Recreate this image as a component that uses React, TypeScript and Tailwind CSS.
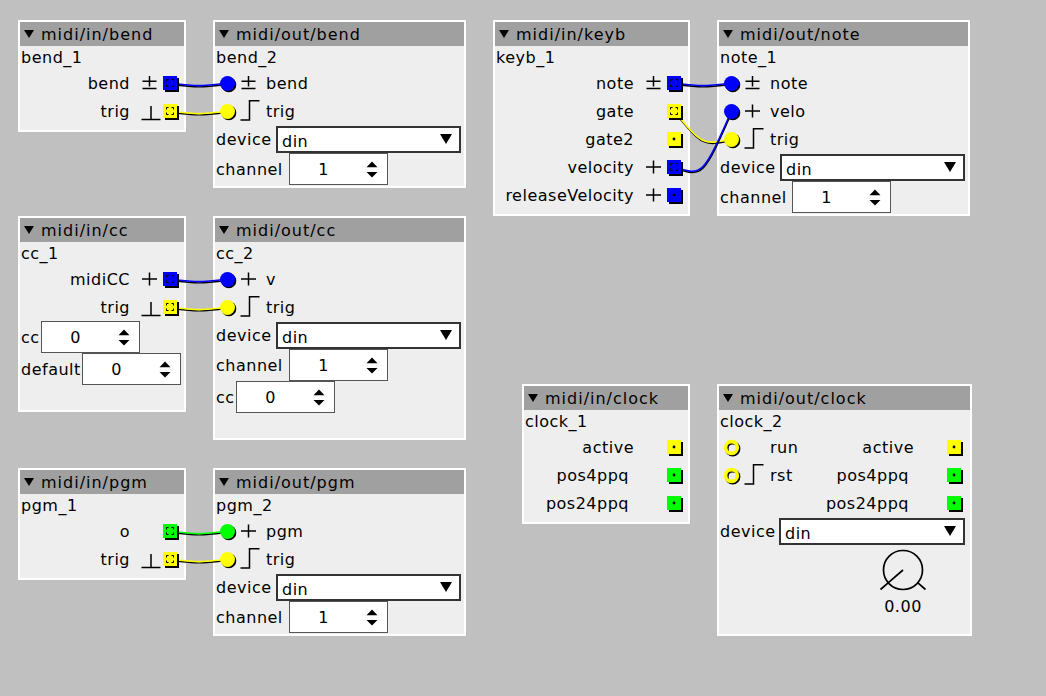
import React from "react";

type C = "blue" | "yellow" | "green";
const COL: Record<C, string> = { blue: "#0000ff", yellow: "#ffff00", green: "#00ff00" };
type G = "pm" | "plus" | "bool" | "edge" | "none";

const GLYPH: Record<G, string> = {
  pm: "M8.5 4 V14.5 M1.5 9.25 H15.5 M1.5 16.5 H15.5",
  plus: "M8.5 4.5 V17.5 M1 11 H16",
  bool: "M10 6 V19.5 M0.5 19.5 H19.5",
  edge: "M0.5 20 H9.5 V0.75 H19.5",
  none: "",
};

function Glyph({ kind, className = "" }: { kind: G; className?: string }) {
  return (
    <svg width="20" height="22" viewBox="0 0 20 22" className={`shrink-0 ${className}`}>
      {kind !== "none" && <path d={GLYPH[kind]} stroke="#000" strokeWidth="1.5" fill="none" />}
    </svg>
  );
}

function OutJack({ color, connected }: { color: C; connected: boolean }) {
  return (
    <svg width="14" height="14" viewBox="0 0 14 14" className="relative z-20 shrink-0 overflow-visible ml-[2px]">
      <rect x="2" y="2" width="14" height="14" fill="#000" />
      <rect x="0" y="0" width="14" height="14" fill={COL[color]} />
      {connected ? (
        <path
          d="M3.5 5.5 V3.5 H5.5 M8.5 3.5 H10.5 V5.5 M10.5 8.5 V10.5 H8.5 M5.5 10.5 H3.5 V8.5"
          stroke="#000"
          strokeWidth="1"
          fill="none"
        />
      ) : (
        <circle cx="7" cy="7" r="1.4" fill="#000" />
      )}
    </svg>
  );
}

function InJack({ color, connected }: { color: C; connected: boolean }) {
  return (
    <svg width="15" height="15" viewBox="0 0 15 15" className="relative z-20 shrink-0 overflow-visible">
      {connected ? (
        <>
          <circle cx="8.8" cy="8.8" r="7.5" fill="#000" />
          <circle cx="7.5" cy="7.5" r="7.5" fill={COL[color]} />
        </>
      ) : (
        <>
          <circle cx="8.7" cy="8.7" r="5.9" fill="none" stroke="#000" strokeWidth="3.6" />
          <circle cx="7.5" cy="7.5" r="5.9" fill="none" stroke={COL[color]} strokeWidth="3.6" />
        </>
      )}
    </svg>
  );
}

function In({ label, glyph, color, connected = true }: { label: string; glyph: G; color: C; connected?: boolean }) {
  return (
    <div className="h-[28px] shrink-0 flex items-center pl-[5px]">
      <InJack color={color} connected={connected} />
      <Glyph kind={glyph} className="ml-[5px]" />
      <span className="ml-[6px]">{label}</span>
    </div>
  );
}

function Out({
  label,
  glyph,
  color,
  connected = true,
  lc = "mr-[11px]",
  pr = "pr-[7px]",
}: {
  label: string;
  glyph: G;
  color: C;
  connected?: boolean;
  lc?: string;
  pr?: string;
}) {
  return (
    <div className={`h-[28px] shrink-0 flex items-center justify-end ${pr}`}>
      <span className={lc}>{label}</span>
      <Glyph kind={glyph} />
      <OutJack color={color} connected={connected} />
    </div>
  );
}

function Dropdown({ w = "w-[185px]" }: { w?: string }) {
  return (
    <div className={`${w} h-[27px] bg-white border-2 border-[#333333] flex items-center justify-between pl-[4px] pr-[7px]`}>
      <span className="pt-[4px]">din</span>
      <svg width="12" height="10" viewBox="0 0 12 10" className="shrink-0">
        <path d="M0 0 H12 L6 10 Z" fill="#000" />
      </svg>
    </div>
  );
}

function Spinner({ value }: { value: string }) {
  return (
    <div className="w-[99px] h-[32px] bg-white border border-[#555555] flex items-center">
      <span className="w-[67px] text-center">{value}</span>
      <svg width="12" height="17" viewBox="0 0 12 17" className="ml-[9px] shrink-0">
        <path d="M0.5 6.2 L6 0.5 L11.5 6.2 Z" fill="#000" />
        <path d="M0.5 11 L11.5 11 L6 16.5 Z" fill="#000" />
      </svg>
    </div>
  );
}

function DeviceRow({ lw = "w-[60px]", dw = "w-[185px]" }: { lw?: string; dw?: string }) {
  return (
    <div className="h-[28px] shrink-0 flex items-center pl-[1px]">
      <span className={lw}>device</span>
      <Dropdown w={dw} />
    </div>
  );
}

function SpinRow({ label, lw, value }: { label: string; lw: string; value: string }) {
  return (
    <div className="h-[32px] shrink-0 flex items-center pl-[1px]">
      <span className={lw}>{label}</span>
      <Spinner value={value} />
    </div>
  );
}

function Node({ pos, title, name, children }: { pos: string; title: string; name: string; children?: React.ReactNode }) {
  return (
    <div className={`absolute flex flex-col bg-[#eeeeee] border-2 border-white ${pos}`}>
      <div className="h-[24px] shrink-0 bg-[#a0a0a0] flex items-center pl-[4px] tracking-[1px]">
        <svg width="10" height="8" viewBox="0 0 10 8" className="mr-[7px] shrink-0">
          <path d="M0 0 H10 L5 8 Z" fill="#000" />
        </svg>
        <span>{title}</span>
      </div>
      <div className="h-[23px] shrink-0 flex items-center pl-[1px]">{name}</div>
      {children}
    </div>
  );
}

function wirePath(x1: number, y1: number, x2: number, y2: number) {
  const cy = Math.max(y1, y2) + Math.abs(y2 - y1) * 0.1 + Math.abs(x2 - x1) * 0.06;
  const mx = (x1 + x2) / 2;
  return `M${x1} ${y1} C${mx} ${cy} ${mx} ${cy} ${x2} ${y2}`;
}

const OUTX_L = 186 - 16;
const INX_M = 213 + 14.5;
const OUTX_K = 690 - 16;
const INX_N = 717 + 14.5;
const row = (t: number, k: number) => t + 63 + 28 * k;

const WIRES: { d: string; c: C }[] = [
  { d: wirePath(OUTX_L, row(20, 0), INX_M, row(20, 0)), c: "blue" },
  { d: wirePath(OUTX_L, row(20, 1), INX_M, row(20, 1)), c: "yellow" },
  { d: wirePath(OUTX_L, row(216, 0), INX_M, row(216, 0)), c: "blue" },
  { d: wirePath(OUTX_L, row(216, 1), INX_M, row(216, 1)), c: "yellow" },
  { d: wirePath(OUTX_L, row(468, 0), INX_M, row(468, 0)), c: "green" },
  { d: wirePath(OUTX_L, row(468, 1), INX_M, row(468, 1)), c: "yellow" },
  { d: wirePath(OUTX_K, row(20, 0), INX_N, row(20, 0)), c: "blue" },
  { d: wirePath(OUTX_K, row(20, 1), INX_N, row(20, 2)), c: "yellow" },
  { d: wirePath(OUTX_K, row(20, 3), INX_N, row(20, 1)), c: "blue" },
];

export default function App() {
  return (
    <div className="relative w-[1046px] h-[696px] overflow-hidden bg-[#c0c0c0] text-black text-[16px] leading-[19px] tracking-[0.5px] font-['DejaVu_Sans',sans-serif]">
      <Node pos="left-[18px] top-[20px] w-[168px] h-[112px]" title="midi/in/bend" name="bend_1">
        <Out label="bend" glyph="pm" color="blue" />
        <Out label="trig" glyph="bool" color="yellow" />
      </Node>

      <Node pos="left-[213px] top-[20px] w-[253px] h-[168px]" title="midi/out/bend" name="bend_2">
        <In label="bend" glyph="pm" color="blue" />
        <In label="trig" glyph="edge" color="yellow" />
        <DeviceRow />
        <SpinRow label="channel" lw="w-[73px]" value="1" />
      </Node>

      <Node pos="left-[493px] top-[20px] w-[197px] h-[196px]" title="midi/in/keyb" name="keyb_1">
        <Out label="note" glyph="pm" color="blue" />
        <Out label="gate" glyph="none" color="yellow" />
        <Out label="gate2" glyph="none" color="yellow" connected={false} />
        <Out label="velocity" glyph="plus" color="blue" />
        <Out label="releaseVelocity" glyph="plus" color="blue" connected={false} />
      </Node>

      <Node pos="left-[717px] top-[20px] w-[253px] h-[196px]" title="midi/out/note" name="note_1">
        <In label="note" glyph="pm" color="blue" />
        <In label="velo" glyph="plus" color="blue" />
        <In label="trig" glyph="edge" color="yellow" />
        <DeviceRow />
        <SpinRow label="channel" lw="w-[72px]" value="1" />
      </Node>

      <Node pos="left-[18px] top-[216px] w-[168px] h-[196px]" title="midi/in/cc" name="cc_1">
        <Out label="midiCC" glyph="plus" color="blue" />
        <Out label="trig" glyph="bool" color="yellow" />
        <SpinRow label="cc" lw="w-[20px]" value="0" />
        <SpinRow label="default" lw="w-[61px]" value="0" />
      </Node>

      <Node pos="left-[213px] top-[216px] w-[253px] h-[224px]" title="midi/out/cc" name="cc_2">
        <In label="v" glyph="plus" color="blue" />
        <In label="trig" glyph="edge" color="yellow" />
        <DeviceRow />
        <SpinRow label="channel" lw="w-[73px]" value="1" />
        <SpinRow label="cc" lw="w-[20px]" value="0" />
      </Node>

      <Node pos="left-[18px] top-[468px] w-[168px] h-[112px]" title="midi/in/pgm" name="pgm_1">
        <Out label="o" glyph="none" color="green" />
        <Out label="trig" glyph="bool" color="yellow" />
      </Node>

      <Node pos="left-[213px] top-[468px] w-[253px] h-[168px]" title="midi/out/pgm" name="pgm_2">
        <In label="pgm" glyph="plus" color="green" />
        <In label="trig" glyph="edge" color="yellow" />
        <DeviceRow />
        <SpinRow label="channel" lw="w-[73px]" value="1" />
      </Node>

      <Node pos="left-[522px] top-[384px] w-[168px] h-[140px]" title="midi/in/clock" name="clock_1">
        <Out label="active" glyph="none" color="yellow" connected={false} />
        <Out label="pos4ppq" glyph="none" color="green" connected={false} lc="mr-[16px]" />
        <Out label="pos24ppq" glyph="none" color="green" connected={false} lc="mr-[16px]" />
      </Node>

      <Node pos="left-[717px] top-[384px] w-[255px] h-[252px]" title="midi/out/clock" name="clock_2">
        <div className="flex">
          <div className="flex flex-col">
            <In label="run" glyph="none" color="yellow" connected={false} />
            <In label="rst" glyph="edge" color="yellow" connected={false} />
          </div>
          <div className="flex flex-col flex-1">
            <Out label="active" glyph="none" color="yellow" connected={false} pr="pr-[9px]" />
            <Out label="pos4ppq" glyph="none" color="green" connected={false} lc="mr-[16px]" pr="pr-[9px]" />
            <Out label="pos24ppq" glyph="none" color="green" connected={false} lc="mr-[16px]" pr="pr-[9px]" />
          </div>
        </div>
        <DeviceRow lw="w-[59px]" dw="w-[186px]" />
        <div className="ml-[159px] mt-[4px] w-[50px] flex flex-col items-center">
          <svg width="50" height="46" viewBox="0 0 50 46" className="shrink-0">
            <circle cx="25" cy="21" r="19.5" fill="none" stroke="#000" strokeWidth="1.7" />
            <path d="M25 21 L10.4 33.7 M10.4 33.7 L2.5 40.5 M39.6 33.7 L47.5 40.5" stroke="#000" strokeWidth="1.7" fill="none" />
          </svg>
          <span className="mt-[2px]">0.00</span>
        </div>
      </Node>

      <svg className="absolute left-0 top-0 z-10 pointer-events-none" width="1046" height="696" viewBox="0 0 1046 696">
        {WIRES.map((w, i) => (
          <g key={i}>
            <path d={w.d} transform="translate(0.4,1.3)" stroke="#000" strokeWidth="1.4" fill="none" />
            <path d={w.d} stroke={COL[w.c]} strokeWidth="1.6" fill="none" />
          </g>
        ))}
      </svg>
    </div>
  );
}
